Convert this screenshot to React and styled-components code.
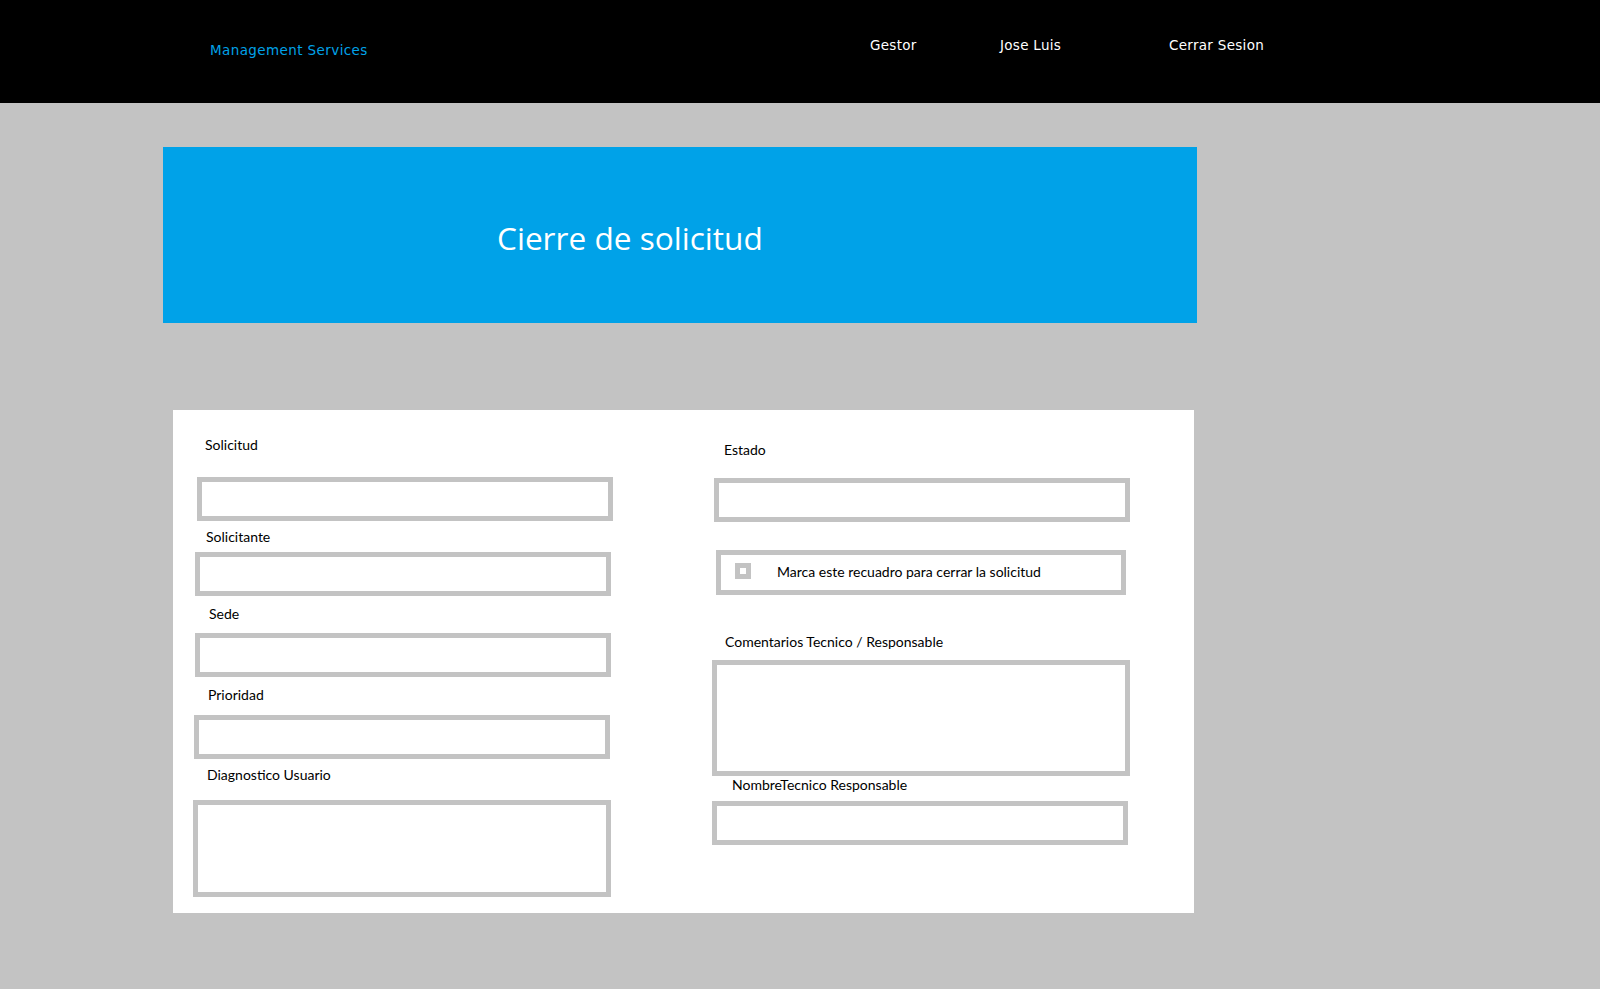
import React from 'react';
import styled, { createGlobalStyle } from 'styled-components';

const GlobalStyle = createGlobalStyle`
	html, body {
		margin: 0;
		padding: 0;
		background: #C3C3C3;
	}
	* {
		box-sizing: border-box;
	}
`;

const Page = styled.div`
	min-height: 989px;
	background: #C3C3C3;
	display: flex;
	flex-direction: column;
`;

const Header = styled.header`
	height: 103px;
	background: #000000;
	display: flex;
	align-items: flex-start;
	padding-left: 210px;
	font-family: 'DejaVu Sans', 'Open Sans', sans-serif;
`;

const Brand = styled.div`
	width: 660px;
	flex-shrink: 0;
	padding-top: 42px;
	font-size: 13.5px;
	line-height: 17px;
	letter-spacing: 0.4px;
	color: #00A2E8;
`;

const NavItem = styled.div`
	width: ${(props) => props.$width || 'auto'};
	flex-shrink: 0;
	padding-top: 37px;
	font-size: 13.5px;
	line-height: 17px;
	letter-spacing: 0.3px;
	color: #FFFFFF;
`;

const Main = styled.main`
	padding: 44px 0 0 163px;
	display: flex;
	flex-direction: column;
	align-items: flex-start;
`;

const Banner = styled.div`
	width: 1034px;
	height: 176px;
	background: #00A2E8;
	display: flex;
	align-items: center;
	padding-left: 334px;
	padding-top: 4px;
`;

const Title = styled.h1`
	margin: 0;
	font-family: 'Open Sans', sans-serif;
	font-weight: 400;
	font-size: 31.6px;
	color: #FFFFFF;
`;

const Card = styled.section`
	margin: 87px 0 0 10px;
	width: 1021px;
	height: 503px;
	background: #FFFFFF;
	padding: 26px 0 0 22px;
	display: grid;
	grid-template-columns: 416px 416px;
	column-gap: 103px;
	align-items: start;
	font-family: Lato, 'Open Sans', sans-serif;
`;

const Column = styled.div`
	display: flex;
	flex-direction: column;
`;

const Label = styled.label`
	display: block;
	height: 18px;
	line-height: 18px;
	font-size: 14px;
	color: #000000;
	margin-top: ${(props) => props.$mt || 0}px;
	margin-left: ${(props) => props.$ml || 11}px;
	margin-bottom: ${(props) => props.$mb || 0}px;
`;

const Box = styled.div`
	width: ${(props) => props.$w || 416}px;
	height: ${(props) => props.$h || 44}px;
	margin-top: ${(props) => props.$mt || 0}px;
	margin-left: ${(props) => props.$ml || 0}px;
	border: 5px solid #C3C3C3;
	background: #FFFFFF;
`;

const CheckRow = styled(Box)`
	display: flex;
	align-items: center;
	padding-left: 14px;
	padding-bottom: 3px;
	gap: 26px;
`;

const CheckSquare = styled.span`
	width: 16px;
	height: 16px;
	border: 5px solid #C3C3C3;
	flex-shrink: 0;
`;

const CheckText = styled.span`
	font-size: 14px;
	color: #000000;
`;

const App = () => {
	return (
		<>
			<GlobalStyle />
			<Page>
				<Header>
					<Brand>Management Services</Brand>
					<NavItem $width="130px">Gestor</NavItem>
					<NavItem $width="169px">Jose Luis</NavItem>
					<NavItem>Cerrar Sesion</NavItem>
				</Header>
				<Main>
					<Banner>
						<Title>Cierre de solicitud</Title>
					</Banner>
					<Card>
						<Column>
							<Label $ml={10}>Solicitud</Label>
							<Box $mt={23} $ml={2} />
							<Label $mt={7}>Solicitante</Label>
							<Box $mt={6} />
							<Label $mt={9} $ml={14} $mb={1}>Sede</Label>
							<Box $mt={9} />
							<Label $mt={9} $ml={13} $mb={1}>Prioridad</Label>
							<Box $mt={10} $ml={-1} />
							<Label $mt={7} $ml={12} $mb={2}>Diagnostico Usuario</Label>
							<Box $mt={14} $ml={-2} $w={418} $h={97} />
						</Column>
						<Column>
							<Label $mt={5} $ml={10} $mb={1}>Estado</Label>
							<Box $mt={18} />
							<CheckRow $mt={28} $ml={2} $w={410} $h={45}>
								<CheckSquare />
								<CheckText>Marca este recuadro para cerrar la solicitud</CheckText>
							</CheckRow>
							<Label $mt={38} $ml={11} $mb={1}>Comentarios Tecnico / Responsable</Label>
							<Box $mt={8} $ml={-2} $w={418} $h={116} />
							<Label $ml={18}>NombreTecnico Responsable</Label>
							<Box $mt={7} $ml={-2} />
						</Column>
					</Card>
				</Main>
			</Page>
		</>
	);
};

export default App;
